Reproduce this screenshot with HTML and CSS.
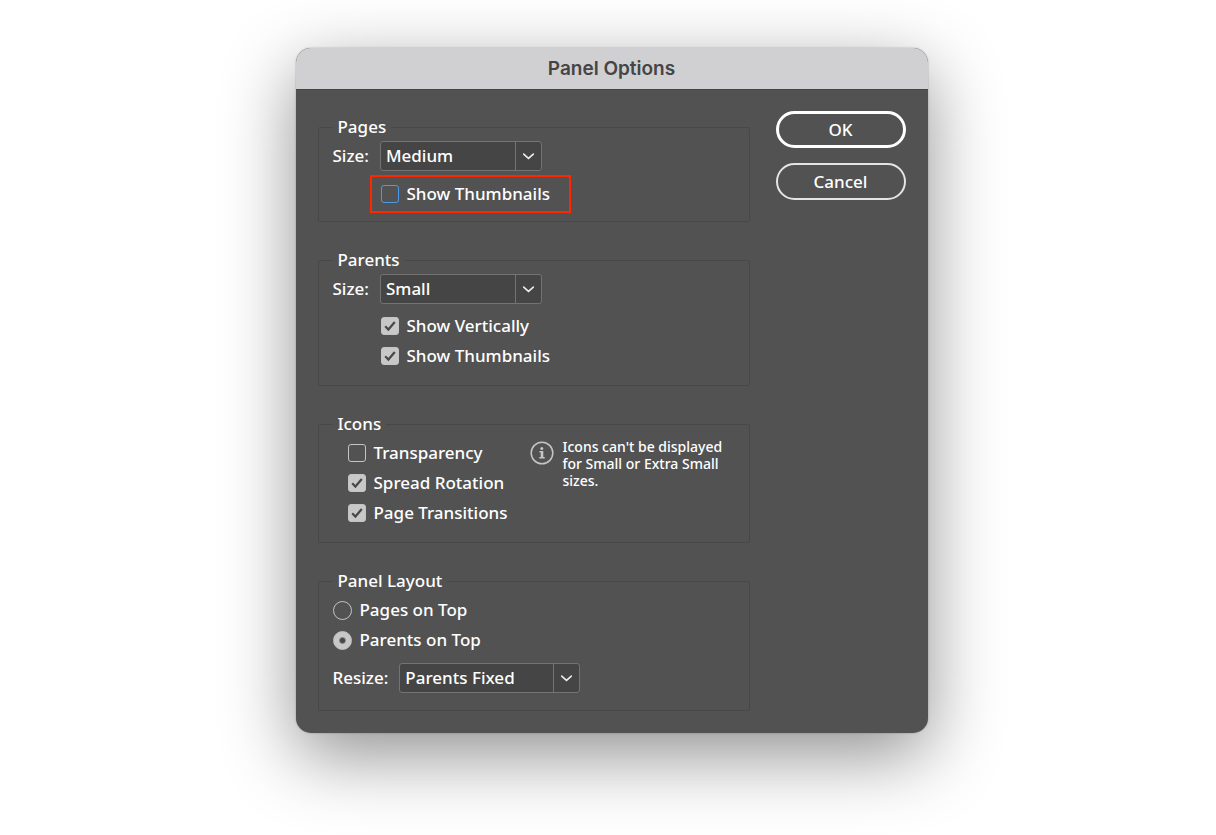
FILE: index.html
```html
<!DOCTYPE html>
<html lang="en">
<head>
	<meta charset="UTF-8">
	<title>Panel Options</title>
	<link rel="stylesheet" href="styles.css">
</head>
<body>
	<form class="dialog">
		<h1 class="title">Panel Options</h1>
		<div class="content">
			<div class="groups">
				<fieldset class="group pages">
					<legend>Pages</legend>
					<div class="row">
						<label for="pages-size">Size:</label>
						<span class="select">
							<select id="pages-size">
								<option>Medium</option>
							</select>
							<svg class="arrow" viewBox="0 0 26 28"><path d="M8 12l5 4.500 5-4.500"/></svg>
						</span>
					</div>
					<label class="check marked"><input type="checkbox">Show Thumbnails</label>
				</fieldset>
				<fieldset class="group parents">
					<legend>Parents</legend>
					<div class="row">
						<label for="parents-size">Size:</label>
						<span class="select">
							<select id="parents-size">
								<option>Small</option>
							</select>
							<svg class="arrow" viewBox="0 0 26 28"><path d="M8 12l5 4.500 5-4.500"/></svg>
						</span>
					</div>
					<div class="checks indent">
						<label class="check"><input type="checkbox" checked>Show Vertically</label>
						<label class="check"><input type="checkbox" checked>Show Thumbnails</label>
					</div>
				</fieldset>
				<fieldset class="group icons">
					<legend>Icons</legend>
					<div class="columns">
						<div class="checks">
							<label class="check"><input type="checkbox">Transparency</label>
							<label class="check"><input type="checkbox" checked>Spread Rotation</label>
							<label class="check"><input type="checkbox" checked>Page Transitions</label>
						</div>
						<div class="info">
							<svg class="info-icon" viewBox="0 0 24 24">
								<circle class="ring" cx="12" cy="12" r="10.800"/>
								<circle cx="11.800" cy="7.500" r="1.500"/>
								<path d="M9.500 10h3.800v6h1.400v1.500H9.300V16h1.400v-4.500H9.500z"/>
							</svg>
							<p>Icons can't be displayed for Small or Extra Small sizes.</p>
						</div>
					</div>
				</fieldset>
				<fieldset class="group layout">
					<legend>Panel Layout</legend>
					<div class="checks">
						<label class="check"><input type="radio" name="top">Pages on Top</label>
						<label class="check"><input type="radio" name="top" checked>Parents on Top</label>
					</div>
					<div class="row">
						<label for="resize">Resize:</label>
						<span class="select wide">
							<select id="resize">
								<option>Parents Fixed</option>
							</select>
							<svg class="arrow" viewBox="0 0 26 28"><path d="M8 12l5 4.500 5-4.500"/></svg>
						</span>
					</div>
				</fieldset>
			</div>
			<div class="buttons">
				<button type="button" class="ok">OK</button>
				<button type="button">Cancel</button>
			</div>
		</div>
	</form>
</body>
</html>
```
FILE: styles.css
```css
*{
	box-sizing: border-box;
	margin: 0;
	padding: 0;
}
body{
	min-height: 100vh;
	padding: 48px 0 48px 7px;
	background: #fff;
	color: #fff;
	font: 500 17px/20px "Noto Sans", "Open Sans", sans-serif;
}
.dialog{
	max-width: 632px;
	margin: 0 auto;
	border-radius: 15px;
	background: #525252;
	box-shadow: 0 0 2px rgba(0,0,0,.3), 0 22px 72px rgba(0,0,0,.44);
	overflow: hidden;
}
.title{
	height: 42px;
	border-bottom: 1px solid #444;
	background: #d0d0d2;
	color: #454545;
	font: 600 19px/41px Inter, sans-serif;
	text-align: center;
}
.content{
	display: flex;
	gap: 26px;
	padding: 21px 22px 22px;
}
.groups{
	flex: 1;
	display: flex;
	flex-direction: column;
	gap: 28px;
	min-width: 0;
	padding-top: 6px;
}
.group{
	min-width: 0;
	padding: 4px 14px 14px;
	border: 1px solid #484848;
	border-radius: 2px;
}
.group legend{
	padding: 0 5px;
}
.row{
	display: flex;
	align-items: center;
	gap: 11px;
}
/* drop-down lists */
.select{
	position: relative;
	width: 162px;
	height: 30px;
}
.select.wide{
	width: 181px;
}
select{
	width: 100%;
	height: 100%;
	padding: 0 30px 0 5px;
	border: 1px solid #737373;
	border-radius: 3px;
	background: #454545;
	color: #fff;
	font: inherit;
	appearance: none;
}
.arrow{
	position: absolute;
	top: 1px;
	right: 1px;
	width: 26px;
	height: 28px;
	border-left: 1px solid #737373;
	fill: none;
	stroke: #eee;
	stroke-width: 1.6;
	stroke-linecap: round;
	pointer-events: none;
}
/* tick boxes and radio buttons */
.check{
	display: flex;
	align-items: center;
	gap: 8px;
	height: 30px;
}
.check input{
	flex: none;
	width: 18px;
	height: 18px;
	border: 1px solid #c4c4c4;
	border-radius: 3px;
	appearance: none;
}
.check input:checked{
	background: #c8c8c8;
}
.check input[type=checkbox]:checked{
	background: #c8c8c8 url("data:image/svg+xml,%3Csvg xmlns='http://www.w3.org/2000/svg' viewBox='0 0 16 16'%3E%3Cpath d='M3.200 8.200l3.200 3.300 6.400-7.500' fill='none' stroke='%23484848' stroke-width='2.200'/%3E%3C/svg%3E");
}
.check input[type=radio]{
	width: 19px;
	height: 19px;
	border-radius: 50%;
}
.check input[type=radio]:checked{
	background: radial-gradient(circle, #484848 2px, #c8c8c8 4px);
}
.marked{
	width: 201px;
	height: 38px;
	margin: 4px 0 0 37px;
	padding-left: 9px;
	border: 2px solid #ff2600;
}
.marked input{
	border-color: #4b9ce8;
}
.pages{
	padding-bottom: 8px;
}
.indent{
	padding: 7px 0 0 48px;
}
.columns{
	display: flex;
	justify-content: space-between;
	padding-left: 15px;
}
.info{
	display: flex;
	gap: 9px;
	width: 205px;
	font-size: 14px;
	line-height: 17px;
}
.info-icon{
	flex: none;
	width: 24px;
	height: 24px;
	margin-top: 3px;
	fill: #c4c4c4;
}
.ring{
	fill: none;
	stroke: #c4c4c4;
	stroke-width: 1.5;
}
.layout{
	padding-bottom: 17px;
}
.layout .row{
	margin-top: 8px;
}
.buttons{
	flex: none;
	display: flex;
	flex-direction: column;
	gap: 15px;
	width: 130px;
}
button{
	height: 37px;
	border: 2px solid #e4e4e4;
	border-radius: 19px;
	background: none;
	color: #fff;
	font: inherit;
}
.ok{
	border: 3px solid #fff;
}
```
